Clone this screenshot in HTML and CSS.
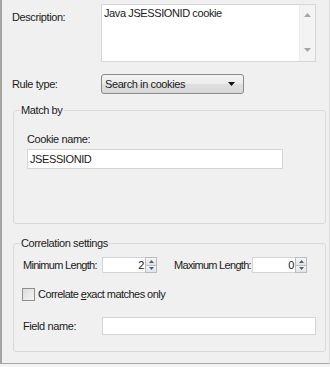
FILE: index.html
```html
<!DOCTYPE html>
<html>
<head>
<meta charset="utf-8">
<link rel="stylesheet" href="styles.css">
</head>
<body>
<div class="window">
  <div class="row desc-row">
    <div class="label desc-label">Description:</div>
    <div class="memo">
      <div class="memo-text">Java JSESSIONID cookie</div>
      <div class="vscroll">
        <svg class="sarrow" width="7" height="4" viewBox="0 0 7 4"><path d="M0 4 L3.5 0 L7 4 Z" fill="#a6a6a6"/></svg>
        <svg class="sarrow" width="7" height="4" viewBox="0 0 7 4"><path d="M0 0 L3.5 4 L7 0 Z" fill="#a6a6a6"/></svg>
      </div>
    </div>
  </div>
  <div class="row rule-row">
    <div class="label">Rule type:</div>
    <div class="combo">
      <span class="combo-text">Search in cookies</span>
      <svg width="7" height="4" viewBox="0 0 7 4"><path d="M0 0 L7 0 L3.5 4 Z" fill="#111"/></svg>
    </div>
  </div>
  <fieldset class="group match-group">
    <legend>Match by</legend>
    <div class="match-body">
      <div class="label">Cookie name:</div>
      <div class="textbox cookie-box">JSESSIONID</div>
    </div>
  </fieldset>
  <fieldset class="group corr-group">
    <legend>Correlation settings</legend>
    <div class="corr-body">
      <div class="len-row">
        <div class="label len-label">Minimum Length:</div>
        <div class="spin">
          <div class="spin-input">2</div>
          <div class="spin-btns">
            <div class="spin-btn"><svg width="5" height="3" viewBox="0 0 5 3"><path d="M0 3 L2.5 0 L5 3 Z" fill="#4a5d80"/></svg></div>
            <div class="spin-btn"><svg width="5" height="3" viewBox="0 0 5 3"><path d="M0 0 L5 0 L2.5 3 Z" fill="#4a5d80"/></svg></div>
          </div>
        </div>
        <div class="label len-label max-label">Maximum Length:</div>
        <div class="spin">
          <div class="spin-input">0</div>
          <div class="spin-btns">
            <div class="spin-btn"><svg width="5" height="3" viewBox="0 0 5 3"><path d="M0 3 L2.5 0 L5 3 Z" fill="#4a5d80"/></svg></div>
            <div class="spin-btn"><svg width="5" height="3" viewBox="0 0 5 3"><path d="M0 0 L5 0 L2.5 3 Z" fill="#4a5d80"/></svg></div>
          </div>
        </div>
      </div>
      <div class="check-row">
        <div class="checkbox"></div>
        <div class="label check-label">Correlate <u>e</u>xact matches only</div>
      </div>
      <div class="field-row">
        <div class="label field-label">Field name:</div>
        <div class="textbox field-box"></div>
      </div>
    </div>
  </fieldset>
</div>
</body>
</html>
```
FILE: styles.css
```css
html, body {
  margin: 0;
  padding: 0;
  background: #f4f4f4;
}
body {
  width: 330px;
  height: 367px;
  overflow: hidden;
  font-family: "Liberation Sans", Arial, sans-serif;
  font-size: 11px;
  letter-spacing: -0.4px;
  color: #1a1a1a;
}
.window {
  box-sizing: border-box;
  width: 330px;
  height: 364px;
  background: #f0f0f0;
  border-left: 2px solid #a4a4a4;
  border-bottom: 1px solid #a8a8a8;
  border-right: 1px solid #dcdcdc;
  padding: 4px 0 0 10px;
}
.label {
  line-height: 13px;
  white-space: nowrap;
}
.row {
  display: flex;
}
.desc-row {
  height: 58px;
}
.desc-label {
  width: 89px;
  padding-top: 7px;
}
.memo {
  box-sizing: border-box;
  width: 215px;
  height: 58px;
  background: #fff;
  border: 1px solid #d4d6d9;
  display: flex;
}
.memo-text {
  flex: 1;
  padding: 2px 0 0 2px;
  line-height: 13px;
}
.vscroll {
  width: 15px;
  background: #f3f3f3;
  border-left: 1px solid #ececec;
  display: flex;
  flex-direction: column;
  justify-content: space-between;
  align-items: center;
  padding: 8px 0 9px;
}
.sarrow {
  display: block;
}
.rule-row {
  margin-top: 12px;
  align-items: center;
  height: 20px;
}
.rule-row .label {
  width: 89px;
}
.combo {
  box-sizing: border-box;
  width: 143px;
  height: 20px;
  border: 1px solid #8a8a8a;
  border-radius: 3px;
  background: linear-gradient(#f4f4f4 0%, #ececec 50%, #dfdfdf 51%, #d9d9d9 100%);
  display: flex;
  align-items: center;
  justify-content: space-between;
  padding: 0 8px 0 3px;
}
.combo svg {
  display: block;
}
.group {
  margin: 0 3px 0 1px;
  padding: 0;
  border: 1px solid #d5dadf;
  border-radius: 3px;
  min-width: 0;
}
.group legend {
  margin-left: 6px;
  padding: 0 1px;
  line-height: 13px;
}
.match-group {
  margin-top: 10px;
}
.match-body {
  padding: 16px 0 54px 13px;
}
.textbox {
  box-sizing: border-box;
  background: #fff;
  border: 1px solid #d2d5d9;
  line-height: 13px;
}
.cookie-box {
  margin-top: 3px;
  width: 256px;
  height: 20px;
  padding: 3px 2px;
}
.corr-group {
  margin-top: 13px;
}
.corr-body {
  padding: 7px 0 16px 9px;
}
.len-row {
  display: flex;
  align-items: center;
  height: 16px;
}
.len-label {
  width: 79px;
  letter-spacing: -0.7px;
}
.max-label {
  margin-left: 17px;
  width: 78px;
}
.field-label {
  width: 79px;
}
.spin {
  display: flex;
  height: 16px;
}
.spin-input {
  box-sizing: border-box;
  width: 43px;
  height: 16px;
  background: #fff;
  border: 1px solid #d2d5d9;
  border-right: none;
  text-align: right;
  line-height: 14px;
  padding-right: 1px;
}
.spin-btns {
  display: flex;
  flex-direction: column;
  width: 12px;
  height: 16px;
}
.spin-btn {
  box-sizing: border-box;
  flex: 1;
  border: 1px solid #b9bcc0;
  background: linear-gradient(#f7f7f7, #e3e3e3);
  display: flex;
  align-items: center;
  justify-content: center;
}
.spin-btn + .spin-btn {
  border-top: none;
}
.spin-btn svg {
  display: block;
}
.check-row {
  display: flex;
  align-items: center;
  margin-top: 15px;
  margin-left: -1px;
  height: 13px;
}
.checkbox {
  box-sizing: border-box;
  width: 13px;
  height: 13px;
  border: 1px solid #8f8f8f;
  background: linear-gradient(135deg, #dcdcdc, #f6f6f6);
  margin-right: 3px;
}
.check-label {
  letter-spacing: -0.55px;
}
.check-row u {
  text-decoration-thickness: 1px;
}
.field-row {
  display: flex;
  align-items: center;
  margin-top: 16px;
  height: 18px;
}
.field-box {
  width: 214px;
  height: 18px;
}
```
